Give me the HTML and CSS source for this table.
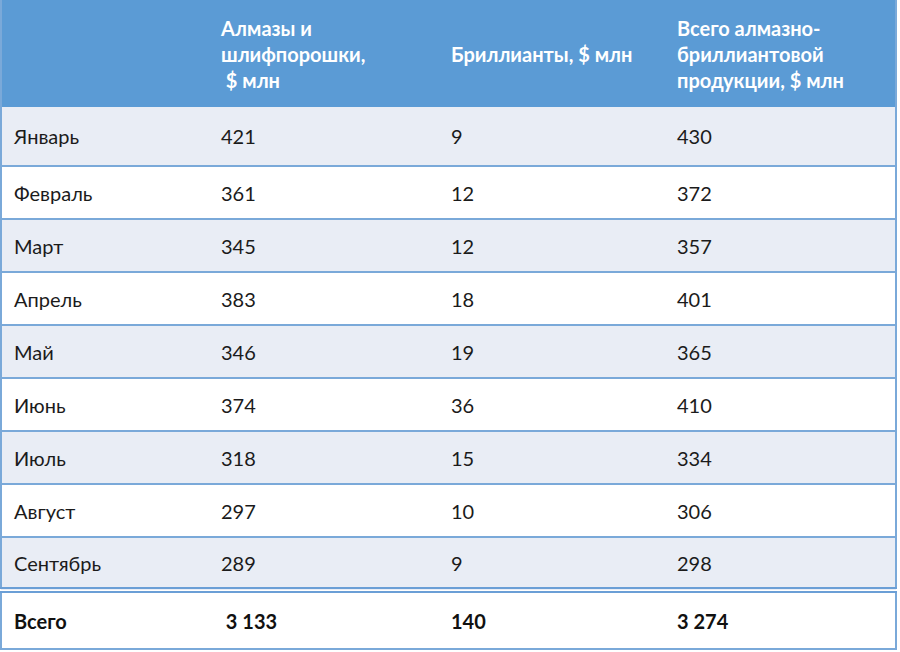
FILE: index.html
```html
<!DOCTYPE html>
<html lang="ru">
<head>
<meta charset="utf-8">
<link rel="stylesheet" href="styles.css">
</head>
<body>
<table class="sales">
  <colgroup>
    <col class="c1"><col class="c2"><col class="c3"><col class="c4">
  </colgroup>
  <thead>
    <tr class="head">
      <th></th>
      <th>Алмазы и<br>шлифпорошки,<br>&nbsp;$ млн</th>
      <th>Бриллианты, $ млн</th>
      <th>Всего алмазно-<br>бриллиантовой<br>продукции, $ млн</th>
    </tr>
  </thead>
  <tbody>
    <tr class="odd first"><td>Январь</td><td>421</td><td>9</td><td>430</td></tr>
    <tr class="even"><td>Февраль</td><td>361</td><td>12</td><td>372</td></tr>
    <tr class="odd"><td>Март</td><td>345</td><td>12</td><td>357</td></tr>
    <tr class="even"><td>Апрель</td><td>383</td><td>18</td><td>401</td></tr>
    <tr class="odd"><td>Май</td><td>346</td><td>19</td><td>365</td></tr>
    <tr class="even"><td>Июнь</td><td>374</td><td>36</td><td>410</td></tr>
    <tr class="odd"><td>Июль</td><td>318</td><td>15</td><td>334</td></tr>
    <tr class="even"><td>Август</td><td>297</td><td>10</td><td>306</td></tr>
    <tr class="odd last"><td>Сентябрь</td><td>289</td><td>9</td><td>298</td></tr>
  </tbody>
  <tfoot>
    <tr class="total"><td>Всего</td><td>&nbsp;3 133</td><td>140</td><td>3 274</td></tr>
  </tfoot>
</table>
</body>
</html>
```
FILE: styles.css
```css
html, body {
  margin: 0;
  padding: 0;
  background: #ffffff;
}
body {
  font-family: Lato, "Open Sans", sans-serif;
  font-size: 20px;
  color: #1b1b1b;
}
.sales {
  width: 895px;
  border-collapse: collapse;
  table-layout: fixed;
  border-left: 2px solid #7aa9d9;
  border-right: 2px solid #7aa9d9;
  border-bottom: 2px solid #7aa9d9;
}
.c1 { width: 208px; }
.c2 { width: 230px; }
.c3 { width: 226px; }
.c4 { width: 231px; }
.sales th, .sales td {
  text-align: left;
  padding: 0 0 0 12px;
  vertical-align: middle;
}
.head {
  background: #5b9bd5;
  height: 107px;
}
.head th {
  color: #ffffff;
  font-weight: bold;
  line-height: 26px;
}
.sales tbody tr {
  height: 53px;
  border-bottom: 2px solid #7aa9d9;
}
.sales tbody tr.first { height: 59px; }
.odd { background: #e9edf5; }
.even { background: #ffffff; }
.sales tbody tr.last {
  border-bottom: 6px double #6b9fd6;
}
.total {
  height: 59px;
  background: #ffffff;
}
.total td {
  font-weight: bold;
  color: #111111;
}
```
